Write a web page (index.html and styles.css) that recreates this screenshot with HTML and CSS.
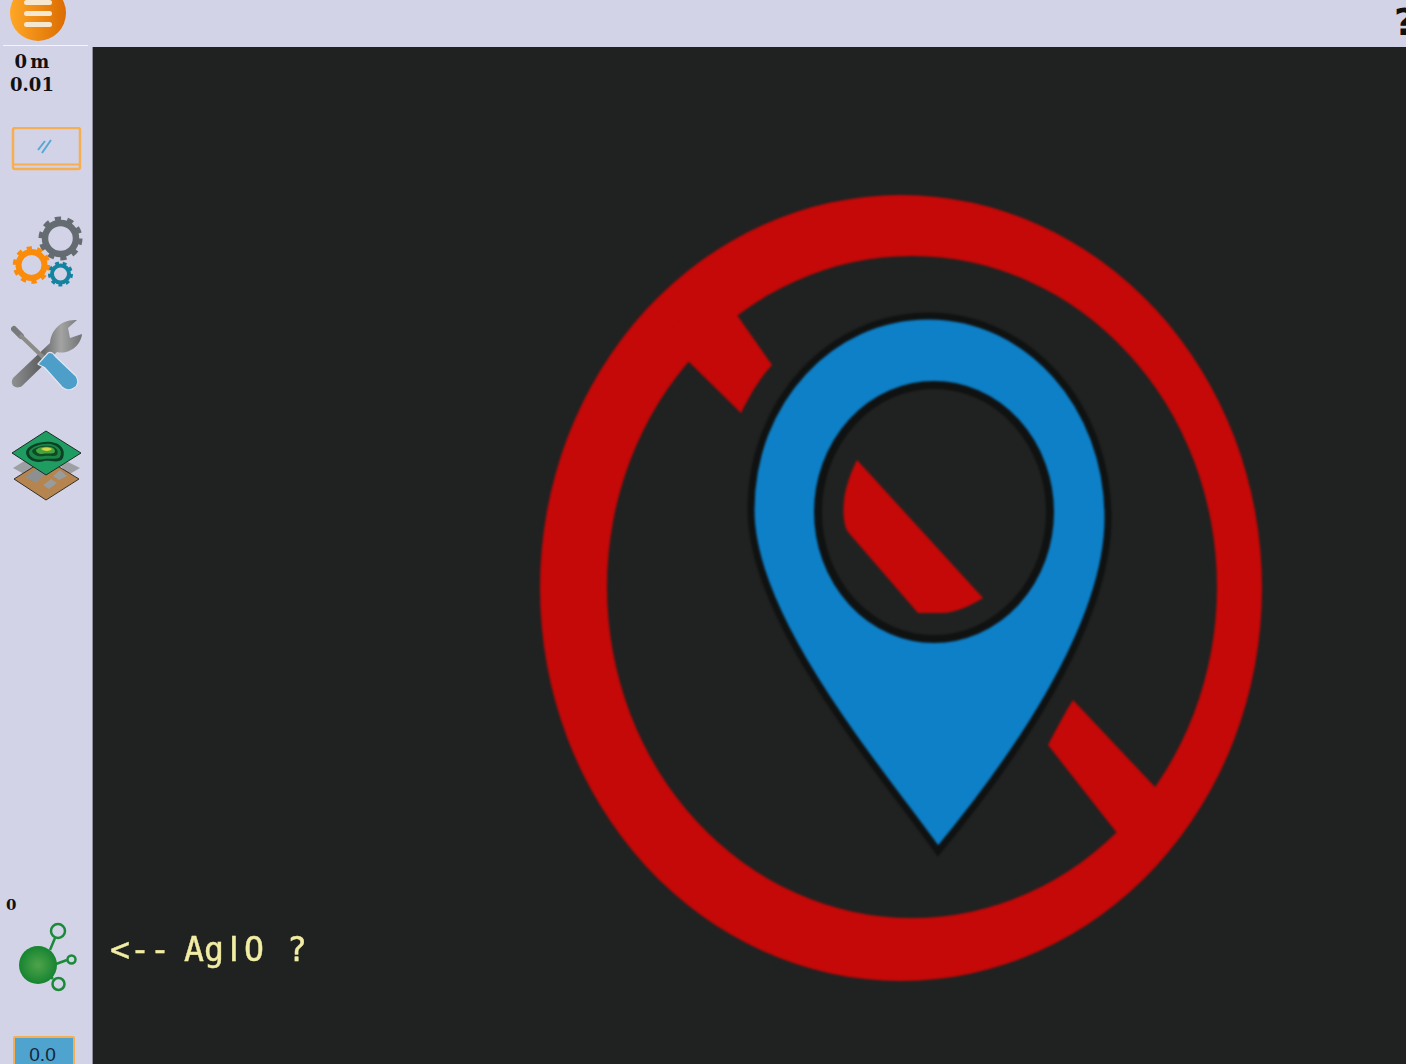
FILE: index.html
```html
<!DOCTYPE html>
<html lang="en">
<head>
    <meta charset="UTF-8">
    <meta name="viewport" content="width=device-width, initial-scale=1.0">
    <title>AgIO</title>
    <link rel="stylesheet" href="styles.css">
</head>
<body>
    <header class="topbar">
        <div class="menu-cell">
            <button class="menu-btn" type="button" aria-label="Menu">
                <span></span><span></span><span></span>
            </button>
        </div>
        <div class="help">?</div>
    </header>

    <div class="layout">
        <aside class="sidebar">
            <div class="stats">
                <div>0 m</div>
                <div>0.01</div>
            </div>

            <!-- display toggle -->
            <svg class="icon icon-screen" width="93" height="44" viewBox="0 127 93 44">
                <rect x="13" y="128" width="67" height="41" rx="2" fill="none" stroke="#f5ae52" stroke-width="2.500"/>
                <path d="M13 164.500H80" stroke="#f5ae52" stroke-width="1.800"/>
                <path d="M38 150L45 141M42 153L51 140" stroke="#55a8d4" stroke-width="2" fill="none"/>
            </svg>

            <!-- settings -->
            <svg class="icon icon-gears" width="93" height="72" viewBox="0 215 93 72">
                <g fill="none" stroke="#646b71">
                    <circle cx="60.500" cy="237.500" r="15.500" stroke-width="6.500"/>
                    <circle cx="60.500" cy="237.500" r="19.500" stroke-width="5" stroke-dasharray="6.125 6.125"/>
                </g>
                <g fill="none" stroke="#fb8c0b">
                    <circle cx="31.500" cy="264" r="13" stroke-width="6"/>
                    <circle cx="31.500" cy="264" r="16.500" stroke-width="4.500" stroke-dasharray="5.180 5.180"/>
                </g>
                <g fill="none" stroke="#14839f">
                    <circle cx="60.500" cy="273" r="8.500" stroke-width="4"/>
                    <circle cx="60.500" cy="273" r="11" stroke-width="3" stroke-dasharray="3.840 3.840"/>
                </g>
            </svg>

            <!-- tools -->
            <svg class="icon icon-tools" width="93" height="72" viewBox="0 317 93 72">
                <defs>
                    <linearGradient id="wrenchFill" x1="0" y1="0" x2="1" y2="0">
                        <stop offset="0" stop-color="#8f9090"/>
                        <stop offset="0.400" stop-color="#5f6062"/>
                        <stop offset="0.700" stop-color="#a2a3a2"/>
                        <stop offset="1" stop-color="#707173"/>
                    </linearGradient>
                </defs>
                <path d="M13 377L50 342C51 330 60 318 77 319L68 327L70 337L82 333C81 345 68 354 57 351L22 385C16 389 9 384 13 377Z" fill="url(#wrenchFill)"/>
                <path d="M14 328L21 335" stroke="#77797a" stroke-width="6" stroke-linecap="round"/>
                <path d="M20 334L45 358" stroke="#8b8c85" stroke-width="4"/>
                <path d="M38 363L48 352C50 351 53 352 55 355L76 375C79 380 78 385 74 387C70 390 65 389 62 386L45 367C43 365 40 365 38 363Z" fill="#4d9fc9" stroke="#e2e4ee" stroke-width="1.200"/>
            </svg>

            <!-- field layers -->
            <svg class="icon icon-layers" width="93" height="72" viewBox="0 429 93 72">
                <path d="M13 467L26 459L38 467L24 473Z" fill="#9d9fa2"/>
                <path d="M60 464L68 461L80 467L68 474Z" fill="#9d9fa2"/>
                <path d="M46 458L79 478L46 499L14 478Z" fill="#b5844f" stroke="#33302b"/>
                <path d="M25 476L38 466L46 472L36 482Z" fill="#8d8f90"/>
                <path d="M53 475L60 469L67 475L59 479Z" fill="#9a9b9b"/>
                <path d="M43 484L51 478L57 482L49 488Z" fill="#9a9b9b"/>
                <path d="M46 430L81 452L46 474L12 452Z" fill="#1f9c62" stroke="#1a2b22"/>
                <path d="M26 451C27 444 41 440 51 441C61 442 66 449 63 457C60 463 50 459 44 460C37 463 26 459 26 451Z" fill="#0d3f24"/>
                <path d="M29 451C31 445 43 442 51 443C59 445 63 450 60 456C57 459 50 457 44 458C37 460 29 457 29 451Z" fill="#1b8545"/>
                <path d="M32 450C34 446 44 444 50 445C57 446 59 450 57 454C54 456 49 454 44 455C38 456 33 454 32 450Z" fill="#0e4a28"/>
                <path d="M36 449C38 446 45 445 50 446C55 447 56 450 54 452C50 453 46 452 42 453C38 453 36 451 36 449Z" fill="#45a53a"/>
                <path d="M41 448C44 446 49 446 52 448C51 450 45 451 41 448Z" fill="#d5d64a"/>
            </svg>

            <div class="bottom">
                <div class="count">0</div>
                <svg class="icon icon-nodes" width="93" height="72" viewBox="0 922 93 72">
                    <defs>
                        <radialGradient id="nodeFill">
                            <stop offset="0" stop-color="#4fa34a"/>
                            <stop offset="0.500" stop-color="#33943e"/>
                            <stop offset="1" stop-color="#168430"/>
                        </radialGradient>
                    </defs>
                    <g fill="none" stroke="#1b8a38" stroke-width="2.500">
                        <path d="M50 950L55 938M56 964L67 960M49 975L53 979"/>
                        <circle cx="58" cy="931" r="7"/>
                        <circle cx="71.500" cy="959.500" r="4"/>
                        <circle cx="58.500" cy="984" r="6"/>
                    </g>
                    <circle cx="38" cy="965" r="19" fill="url(#nodeFill)"/>
                </svg>
                <div class="value-box">0.0</div>
            </div>
        </aside>

        <main class="main">
            <!-- no location picture, in page coordinates -->
            <svg class="no-gps" width="1313" height="1017" viewBox="93 47 1313 1017">
                <path fill-rule="evenodd" fill="#c50808" d="M540 588a361 393 0 1 0 722 0a361 393 0 1 0 -722 0ZM607 587a305 331 0 1 1 610 0a305 331 0 1 1 -610 0Z"/>
                <path fill="#c50808" d="M715 295L660 335L689 362L741 413C750 395 760 378 772 365L737 315Z"/>
                <path fill="#c50808" d="M1073 700L1155 787L1185 815L1145 860L1117 833L1048 745C1056 730 1064 714 1073 700Z"/>
                <path fill="#0d80c8" stroke="#101212" stroke-width="7" d="M938 851C880 770 751 620 751 510C751 400 832 316 928 316C1028 316 1108 405 1108 518C1108 630 1005 770 938 851Z"/>
                <ellipse cx="934" cy="512" rx="116" ry="127" fill="#202221" stroke="#101212" stroke-width="8"/>
                <path fill="#c50808" d="M857 460L983 598C970 606 955 613 942 613H918L848 532C843 525 843 510 844 500C846 485 851 472 857 460Z"/>
            </svg>
            <div class="agio-hint">&lt;--<span class="hint-word">Ag<span class="plain-i">I</span>O</span> ?</div>
        </main>
    </div>
</body>
</html>
```

FILE: styles.css
```css
html, body {
    height: 100%;
}
body {
    margin: 0;
    display: flex;
    flex-direction: column;
    overflow: hidden;
    background-color: #d3d3e8;
    font-family: "DejaVu Serif", serif;
    color: #111;
}
.topbar {
    flex: none;
    height: 47px;
    display: flex;
    justify-content: space-between;
    overflow: hidden;
}
.menu-cell {
    width: 85px;
    height: 45px;
    margin-left: 3px;
    border-bottom: 1px solid #f4f4fa;
}
.menu-btn {
    display: flex;
    flex-direction: column;
    align-items: center;
    justify-content: center;
    gap: 6px;
    width: 56px;
    height: 56px;
    margin: -15px 0 0 7px;
    padding: 0;
    border: none;
    border-radius: 50%;
    background: linear-gradient(90deg, #ffa726, #db6d02);
}
.menu-btn span {
    width: 28px;
    height: 5px;
    border-radius: 3px;
    background-color: #f6e7d2;
}
.help {
    margin-right: -10px;
    font-family: "DejaVu Sans", sans-serif;
    font-size: 38px;
    font-weight: bold;
    line-height: 44px;
}
.layout {
    flex: 1;
    display: flex;
    min-height: 0;
}
.sidebar {
    flex: none;
    width: 92px;
    display: flex;
    flex-direction: column;
    border-right: 1px solid #8d8d9e;
}
.stats {
    width: 64px;
    padding-top: 3px;
    font-size: 18px;
    font-weight: bold;
    line-height: 23px;
    text-align: center;
    word-spacing: -3px;
}
.icon {
    display: block;
    flex: none;
    filter: blur(0.5px);
}
.icon-screen {
    margin-top: 31px;
}
.icon-gears {
    margin-top: 45px;
}
.icon-tools {
    margin-top: 30px;
}
.icon-layers {
    margin-top: 40px;
}
.bottom {
    margin-top: auto;
    margin-bottom: -8px;
}
.count {
    margin-bottom: 6px;
    padding-left: 6px;
    font-size: 15px;
    font-weight: bold;
    line-height: 21px;
}
.value-box {
    box-sizing: border-box;
    width: 62px;
    height: 36px;
    margin: 42px 0 0 13px;
    padding-right: 3px;
    border: 2px solid #f5ae52;
    border-radius: 2px;
    background-color: #4fa3cf;
    font-family: "Liberation Sans", sans-serif;
    font-size: 19px;
    line-height: 34px;
    text-align: center;
    color: #14263a;
}
.main {
    flex: 1;
    position: relative;
    background-color: #202221;
    overflow: hidden;
}
.no-gps {
    display: block;
    filter: blur(1.2px);
}
.agio-hint {
    position: absolute;
    left: 17px;
    top: 883px;
    font-family: "DejaVu Sans Mono", monospace;
    font-size: 33.200px;
    white-space: pre;
    color: #f2eda4;
    -webkit-text-stroke: 0.4px #f2eda4;
    filter: blur(0.4px);
}
.hint-word {
    margin: 0 3px 0 14px;
}
.plain-i {
    display: inline-block;
    width: 20px;
    font-family: "DejaVu Sans", sans-serif;
    text-align: center;
}
```
